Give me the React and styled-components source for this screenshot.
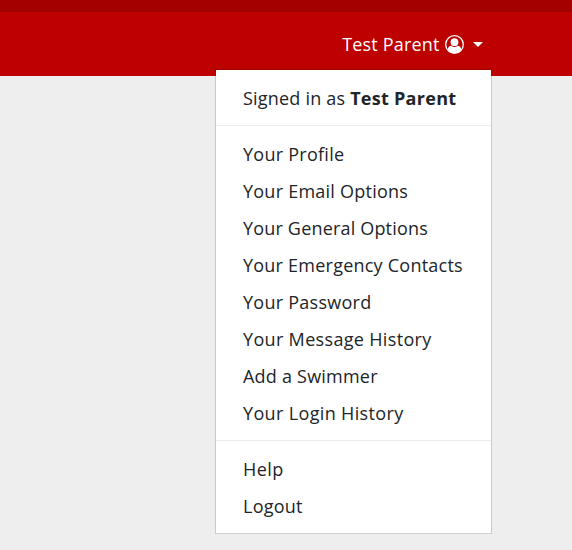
import React from 'react';
import styled, { createGlobalStyle } from 'styled-components';

const GlobalStyle = createGlobalStyle`
  *, *::before, *::after { box-sizing: border-box; }
  body {
    margin: 0;
    background: #eeeeee;
    color: #212529;
    font-family: "Open Sans", "Noto Sans", sans-serif;
    font-size: 18px;
    line-height: 27px;
  }
`;

const Page = styled.div`
  height: 550px;
  overflow: hidden;
`;

const TopStrip = styled.div`
  height: 12px;
  background: #a40000;
`;

const Navbar = styled.nav`
  display: flex;
  justify-content: flex-end;
  height: 64px;
  padding: 19px 89px 0 0;
  background: #bd0000;
`;

const Dropdown = styled.div`
  position: relative;
  height: 27px;
`;

const Toggle = styled.button`
  display: flex;
  align-items: center;
  height: 27px;
  padding: 0;
  border: 0;
  background: transparent;
  color: #fff;
  font: inherit;
  letter-spacing: 0.18px;
  white-space: nowrap;
`;

const UserIcon = styled.svg`
  width: 19px;
  height: 19px;
  margin: 0 9px 0 5.4px;
`;

const Caret = styled.span`
  margin-bottom: 1px;
  border-top: 5px solid #fff;
  border-left: 5px solid transparent;
  border-right: 5px solid transparent;
`;

const Menu = styled.div`
  position: absolute;
  top: 38px;
  right: -9px;
  width: 277px;
  height: 465px;
  padding: 10px 0 8px;
  border: 1px solid rgba(0, 0, 0, 0.15);
  border-bottom-color: rgba(0, 0, 0, 0.12);
  background: #fff;
  background-clip: padding-box;
`;

const MenuText = styled.div`
  padding: 5px 27px;
  letter-spacing: 0.2px;
  white-space: nowrap;

  strong {
    letter-spacing: 0.28px;
  }
`;

const MenuItem = styled.a`
  display: block;
  padding: 5px 27px;
  color: #212529;
  letter-spacing: ${({ $tracking }) => $tracking}px;
  text-decoration: none;
  white-space: nowrap;
`;

const Divider = styled.div`
  height: 1px;
  margin: 8px 0 10px;
  background: #e9ecef;
`;

const ACCOUNT_LINKS = [
  { label: 'Your Profile', tracking: 0.26 },
  { label: 'Your Email Options', tracking: 0.24 },
  { label: 'Your General Options', tracking: 0.18 },
  { label: 'Your Emergency Contacts', tracking: 0.23 },
  { label: 'Your Password', tracking: 0.26 },
  { label: 'Your Message History', tracking: 0.33 },
  { label: 'Add a Swimmer', tracking: 0.22 },
  { label: 'Your Login History', tracking: 0.35 },
];

const SESSION_LINKS = [
  { label: 'Help', tracking: 0.45 },
  { label: 'Logout', tracking: 0.25 },
];

function MenuLinks({ links }) {
  return links.map(({ label, tracking }) => (
    <MenuItem key={label} $tracking={tracking}>{label}</MenuItem>
  ));
}

export default function App() {
  return (
    <>
      <GlobalStyle />
      <Page>
        <TopStrip />
        <Navbar>
          <Dropdown>
            <Toggle type="button">
              Test Parent
              <UserIcon viewBox="0 0 19 19" aria-hidden="true">
                <circle cx="9.5" cy="9.5" r="8.8" fill="none" stroke="#fff" strokeWidth="1.3" />
                <circle cx="9.5" cy="7.2" r="3.9" fill="#fff" />
                <path d="M2.7 14.7C3.1 12.1 4.3 10.8 6.2 10.7C8.1 12.3 10.9 12.3 12.8 10.7C14.7 10.8 15.9 12.1 16.3 14.7C12.7 19.2 6.3 19.2 2.7 14.7Z" fill="#fff" />
              </UserIcon>
              <Caret />
            </Toggle>
            <Menu>
              <MenuText>Signed in as <strong>Test Parent</strong></MenuText>
              <Divider />
              <MenuLinks links={ACCOUNT_LINKS} />
              <Divider />
              <MenuLinks links={SESSION_LINKS} />
            </Menu>
          </Dropdown>
        </Navbar>
      </Page>
    </>
  );
}
